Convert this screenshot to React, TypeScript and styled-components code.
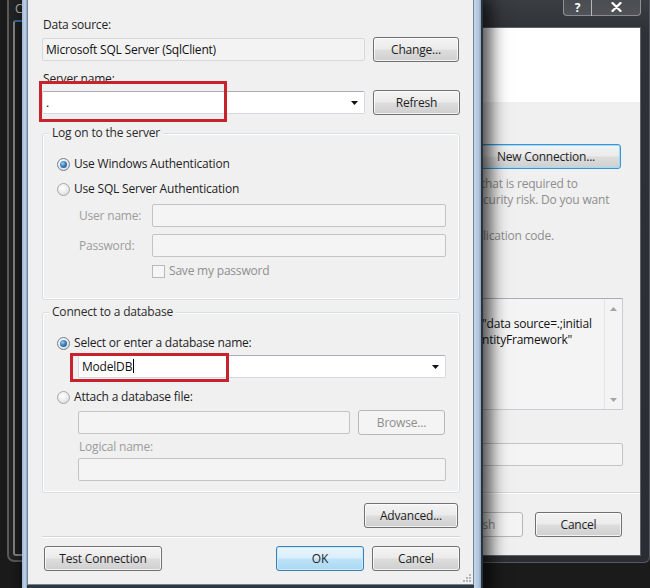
import * as React from 'react';
import styled, { createGlobalStyle, css } from 'styled-components';

const GlobalStyle = createGlobalStyle`
  html,
  body {
    margin: 0;
    padding: 0;
    background: #1b1b1b;
  }

  body {
    font-family: 'Segoe UI', 'Open Sans', 'Noto Sans', sans-serif;
    font-size: 12px;
    letter-spacing: -0.2px;
    color: #1e1e1e;
  }
`;

/** Desktop behind all windows */
const Desktop = styled.div`
  position: relative;
  width: 650px;
  height: 588px;
  overflow: hidden;
  background: #1b1b1b;
`;

/* ---------- window lying far behind, on the left ---------- */

const BackWindow = styled.div`
  position: absolute;
  left: 7px;
  top: -10px;
  z-index: 1;
  width: 140px;
  height: 572px;
  box-sizing: border-box;
  border: 2px solid #5b5b5b;
  border-radius: 7px;
  background: #242424;
  padding: 0 4px 4px;
  display: flex;
  flex-direction: column;
`;

const BackTitle = styled.div`
  height: 28px;
  box-sizing: border-box;
  padding: 9px 0 0 2px;
  line-height: 16px;
  color: #bdbdbd;
`;

const BackClient = styled.div`
  flex: 1;
  border: 2px solid #868686;
  border-top-color: #3a6ea8;
  border-radius: 3px;
  background: #1e1e1e;
`;

/* ---------- wizard window on the right ---------- */

const Wizard = styled.div`
  position: absolute;
  left: 460px;
  top: -6px;
  z-index: 2;
  width: 190px;
  height: 569px;
  box-sizing: border-box;
  padding: 0 9px 7px 10px;
  border-radius: 6px 0 6px 6px;
  background: linear-gradient(#3c4045, #2e3136 40px, #2a2d31);
  box-shadow: inset 0 0 0 1px #55595f;
  display: flex;
  flex-direction: column;
`;

const TitleBar = styled.div`
  height: 33px;
  display: flex;
  justify-content: flex-end;
  align-items: flex-start;
`;

const CaptionButton = styled.div<{ $width: number; $first?: boolean }>`
  width: ${(p) => p.$width}px;
  height: 22px;
  box-sizing: border-box;
  display: flex;
  align-items: center;
  justify-content: center;
  padding-top: 5px;
  margin-left: ${(p) => (p.$first ? 0 : -1)}px;
  border: 1px solid rgba(205, 212, 220, 0.5);
  border-top: none;
  border-radius: ${(p) => (p.$first ? '0 0 0 4px' : '0 0 4px 0')};
  background: linear-gradient(rgba(255, 255, 255, 0.06), rgba(255, 255, 255, 0.14));
  color: #fff;
  font-weight: 700;
  font-size: 12px;
`;

const WizardClient = styled.div`
  flex: 1;
  display: flex;
  flex-direction: column;
  background: #f0f0f0;
  border: 1px solid #5a636e;
`;

const WizardHeader = styled.div`
  height: 74px;
  background: #fff;
`;

const WizardBody = styled.div`
  flex: 1;
  display: flex;
  flex-direction: column;
  align-items: flex-start;
`;

const NoteLine = styled.div<{ $mt: number; $indent: number }>`
  margin-top: ${(p) => p.$mt}px;
  padding-left: ${(p) => p.$indent}px;
  line-height: 16px;
  color: #8e8e8e;
  white-space: nowrap;
`;

const ConnStringBox = styled.div`
  margin-top: 54px;
  width: 152px;
  height: 112px;
  box-sizing: border-box;
  border: 1px solid #c9ccd0;
  border-top-color: #abadb3;
  background: #f4f4f4;
  display: flex;
`;

const ConnText = styled.div`
  flex: 1;
  padding-top: 17px;
  line-height: 16px;
  color: #111;
  white-space: nowrap;
  overflow: hidden;
`;

const ConnLine = styled.div<{ $indent: number }>`
  padding-left: ${(p) => p.$indent}px;
`;

const ScrollBar = styled.div`
  width: 17px;
  border-left: 1px solid #e4e4e4;
  display: flex;
  flex-direction: column;
  justify-content: space-between;
  align-items: center;
  padding: 8px 0 7px;
`;

const Separator = styled.div<{ $mt: number }>`
  align-self: stretch;
  margin-top: ${(p) => p.$mt}px;
  height: 1px;
  background: #d5d5d5;
  border-bottom: 1px solid #fff;
`;

const ButtonBar = styled.div<{ $mt: number; $gap: number; $pr?: number }>`
  align-self: stretch;
  margin-top: ${(p) => p.$mt}px;
  padding-right: ${(p) => p.$pr ?? 0}px;
  display: flex;
  justify-content: flex-end;
  gap: ${(p) => p.$gap}px;
`;

/* ---------- Add Connection dialog ---------- */

const Dialog = styled.div`
  position: absolute;
  left: 22px;
  top: 0;
  z-index: 3;
  width: 461px;
  height: 596px;
  box-sizing: border-box;
  padding: 0 7px 0 5px;
  border-right: 2px solid #2b323b;
  background:
    linear-gradient(to right, #9fb8d4, #c0d3e8 60%, #8ea6c2) left top / 5px 100% no-repeat,
    linear-gradient(to right, #c6d7ea, #acc3dd 70%, #8aa2bd) right top / 7px 100% no-repeat,
    #2f3740;
  box-shadow: 5px 0 16px 3px rgba(0, 0, 0, 0.7);
`;

const DialogClient = styled.div`
  position: relative;
  height: 585px;
  box-sizing: border-box;
  padding: 0 13px 0 14px;
  background: #f0f0f0;
  border: 1px solid #6f8296;
  border-top: none;
  display: flex;
  flex-direction: column;
`;

const Label = styled.div<{ $mt?: number; $indent?: number; $muted?: boolean }>`
  margin-top: ${(p) => p.$mt ?? 0}px;
  padding-left: ${(p) => p.$indent ?? 0}px;
  line-height: 16px;
  color: ${(p) => (p.$muted ? '#9c9c9c' : '#1e1e1e')};
  white-space: nowrap;
`;

const Row = styled.div<{ $mt?: number; $indent?: number; $gap?: number; $height?: number }>`
  display: flex;
  align-items: center;
  height: ${(p) => p.$height ?? 25}px;
  margin-top: ${(p) => p.$mt ?? 0}px;
  padding-left: ${(p) => p.$indent ?? 0}px;
  gap: ${(p) => p.$gap ?? 0}px;
`;

const RowLabel = styled.span<{ $width: number }>`
  width: ${(p) => p.$width}px;
  flex: none;
  color: #9c9c9c;
`;

type FieldTone = 'edit' | 'readonly' | 'disabled';

const fieldTones: Record<FieldTone, ReturnType<typeof css>> = {
  edit: css`
    background: #fff;
    border-color: #d5d9de;
    border-top-color: #abadb3;
  `,
  readonly: css`
    background: #f3f3f3;
    border-color: #d6d9dc;
  `,
  disabled: css`
    background: #f4f4f4;
    border-color: #c3c3c3;
  `,
};

const Field = styled.div<{ $width: number; $tone?: FieldTone; $mt?: number }>`
  position: relative;
  width: ${(p) => p.$width}px;
  height: 23px;
  flex: none;
  box-sizing: border-box;
  margin-top: ${(p) => p.$mt ?? 0}px;
  display: flex;
  align-items: center;
  justify-content: space-between;
  padding: 0 6px 0 3px;
  border: 1px solid;
  border-radius: 2px;
  color: #111;
  white-space: nowrap;
  ${(p) => fieldTones[p.$tone ?? 'edit']}
`;

const Caret = styled.span`
  display: inline-block;
  width: 1px;
  height: 14px;
  margin-left: 1px;
  vertical-align: -2px;
  background: #000;
`;

/** Red outline drawn over a field */
const Highlight = styled.div<{ $x: number; $y: number; $w: number; $h: number }>`
  position: absolute;
  left: ${(p) => p.$x}px;
  top: ${(p) => p.$y}px;
  width: ${(p) => p.$w}px;
  height: ${(p) => p.$h}px;
  box-sizing: border-box;
  border: 3px solid #c8232d;
  pointer-events: none;
`;

type ButtonVariant = 'normal' | 'primary' | 'focus' | 'disabled';

const buttonVariants: Record<ButtonVariant, ReturnType<typeof css>> = {
  normal: css``,
  primary: css`
    border-color: #3c7fb1;
    background: linear-gradient(#e9f5fd 0%, #d9effc 48%, #bee3f8 52%, #a9d8f3 100%);
    box-shadow: inset 0 0 0 1px #cbeafc;
  `,
  focus: css`
    border-color: #3d93cf;
    box-shadow: inset 0 0 0 1px #9fdcfa;
  `,
  disabled: css`
    color: #8e8e8e;
    border-color: #b4b8bb;
    background: #f4f4f4;
    box-shadow: none;
  `,
};

const Button = styled.button<{ $width: number; $variant?: ButtonVariant; $mt?: number; $ml?: number }>`
  width: ${(p) => p.$width}px;
  height: 25px;
  flex: none;
  box-sizing: border-box;
  padding: 0;
  margin: ${(p) => p.$mt ?? 0}px 0 0 ${(p) => p.$ml ?? 0}px;
  font: inherit;
  letter-spacing: inherit;
  color: #1e1e1e;
  border: 1px solid #707070;
  border-radius: 3px;
  background: linear-gradient(#f3f3f3 0%, #ebebeb 48%, #dddddd 52%, #cfcfcf 100%);
  box-shadow: inset 0 0 0 1px rgba(255, 255, 255, 0.75);
  white-space: nowrap;
  ${(p) => buttonVariants[p.$variant ?? 'normal']}
`;

const Group = styled.div<{ $mt: number; $pb: number }>`
  margin-top: ${(p) => p.$mt}px;
  padding: 0 13px ${(p) => p.$pb}px 14px;
  border: 1px solid #d5dfe5;
  border-radius: 3px;
  box-shadow: inset 0 0 0 1px #fff;
  display: flex;
  flex-direction: column;
`;

const Legend = styled.div`
  align-self: flex-start;
  margin: -9px 0 0 -8px;
  padding: 0 3px;
  line-height: 16px;
  background: #f0f0f0;
  color: #2b2b2b;
`;

const Option = styled.div<{ $mt: number; $indent?: number; $muted?: boolean }>`
  display: flex;
  align-items: center;
  gap: 4px;
  line-height: 16px;
  margin-top: ${(p) => p.$mt}px;
  padding-left: ${(p) => p.$indent ?? 0}px;
  color: ${(p) => (p.$muted ? '#8f8f8f' : '#1e1e1e')};
  white-space: nowrap;
`;

const Radio = styled.span<{ $checked?: boolean }>`
  width: 13px;
  height: 13px;
  flex: none;
  box-sizing: border-box;
  display: inline-flex;
  align-items: center;
  justify-content: center;
  border-radius: 50%;
  border: 1px solid ${(p) => (p.$checked ? '#6f7f8f' : '#a7a7a7')};
  background: radial-gradient(circle at 40% 35%, #ffffff 0%, #eeeeee 45%, #d2d2d2 100%);

  &::after {
    content: '';
    display: ${(p) => (p.$checked ? 'block' : 'none')};
    width: 7px;
    height: 7px;
    border-radius: 50%;
    background: radial-gradient(circle at 38% 35%, #9fd0f5 0%, #3a7fbf 45%, #1b4f86 100%);
  }
`;

const CheckBox = styled.span`
  width: 13px;
  height: 13px;
  flex: none;
  box-sizing: border-box;
  border: 1px solid #b9b9b9;
  background: #f6f6f6;
`;

const BottomBar = styled.div`
  display: flex;
  align-items: center;
  gap: 8px;
  height: 25px;
  margin-top: 8px;
`;

const Grip = styled.svg`
  position: absolute;
  right: 1px;
  bottom: 1px;
`;

const DropArrow: React.FC<{ color?: string; up?: boolean }> = ({ color = '#111', up }) => (
  <svg width="7" height="4" viewBox="0 0 7 4">
    <path d={up ? 'M0 4h7L3.5 0z' : 'M0 0h7L3.5 4z'} fill={color} />
  </svg>
);

const CloseGlyph = () => (
  <svg width="11" height="10" viewBox="0 0 11 10">
    <path d="M1.5 1l8 8M9.5 1l-8 8" stroke="#fff" strokeWidth="2.3" strokeLinecap="round" />
  </svg>
);

const App: React.FC = () => (
  <Desktop>
    <GlobalStyle />

    <BackWindow>
      <BackTitle>C</BackTitle>
      <BackClient />
    </BackWindow>

    <Wizard>
      <TitleBar>
        <CaptionButton $width={29} $first>?</CaptionButton>
        <CaptionButton $width={50}>
          <CloseGlyph />
        </CaptionButton>
      </TitleBar>
      <WizardClient>
        <WizardHeader />
        <WizardBody>
          <Button $width={150} $variant="focus" $mt={42}>
            New Connection...
          </Button>
          <NoteLine $mt={7} $indent={10}>that is required to</NoteLine>
          <NoteLine $mt={0} $indent={12}>curity risk. Do you want</NoteLine>
          <NoteLine $mt={20} $indent={12}>lication code.</NoteLine>
          <ConnStringBox>
            <ConnText>
              <ConnLine $indent={10}>"data source=.;initial</ConnLine>
              <ConnLine $indent={10}>ntityFramework"</ConnLine>
            </ConnText>
            <ScrollBar>
              <DropArrow color="#a4a4a4" up />
              <DropArrow color="#a4a4a4" />
            </ScrollBar>
          </ConnStringBox>
          <Field $width={152} $tone="disabled" $mt={33} />
          <Separator $mt={26} />
          <ButtonBar $mt={18} $gap={12} $pr={18}>
            <Button $width={87} $variant="disabled">Finish</Button>
            <Button $width={87}>Cancel</Button>
          </ButtonBar>
        </WizardBody>
      </WizardClient>
    </Wizard>

    <Dialog>
      <DialogClient>
        <Label $mt={17} $indent={1}>Data source:</Label>
        <Row $mt={4} $gap={8}>
          <Field $width={323} $tone="readonly">Microsoft SQL Server (SqlClient)</Field>
          <Button $width={86}>Change...</Button>
        </Row>

        <Label $mt={9} $indent={1}>Server name:</Label>
        <Row $mt={3} $gap={8}>
          <Field $width={323}>
            <span>.</span>
            <DropArrow />
            <Highlight $x={-4} $y={-11} $w={188} $h={41} />
          </Field>
          <Button $width={87}>Refresh</Button>
        </Row>

        <Group $mt={18} $pb={20}>
          <Legend>Log on to the server</Legend>
          <Option $mt={15}>
            <Radio $checked />
            Use Windows Authentication
          </Option>
          <Option $mt={9}>
            <Radio />
            Use SQL Server Authentication
          </Option>
          <Row $mt={7} $indent={22} $height={23}>
            <RowLabel $width={73}>User name:</RowLabel>
            <Field $width={294} $tone="disabled" />
          </Row>
          <Row $mt={7} $indent={22} $height={23}>
            <RowLabel $width={73}>Password:</RowLabel>
            <Field $width={294} $tone="disabled" />
          </Row>
          <Option $mt={6} $indent={95} $muted>
            <CheckBox />
            Save my password
          </Option>
        </Group>

        <Group $mt={12} $pb={11}>
          <Legend>Connect to a database</Legend>
          <Option $mt={15}>
            <Radio $checked />
            Select or enter a database name:
          </Option>
          <Row $mt={4} $indent={21} $height={23}>
            <Field $width={368}>
              <span>
                ModelDB
                <Caret />
              </span>
              <DropArrow />
              <Highlight $x={-9} $y={-3} $w={159} $h={29} />
            </Field>
          </Row>
          <Option $mt={11}>
            <Radio />
            Attach a database file:
          </Option>
          <Row $mt={5} $indent={21} $gap={8}>
            <Field $width={272} $tone="disabled" />
            <Button $width={87} $variant="disabled">Browse...</Button>
          </Row>
          <Label $mt={4} $indent={22} $muted>Logical name:</Label>
          <Row $mt={3} $indent={21} $height={23}>
            <Field $width={368} $tone="disabled" />
          </Row>
        </Group>

        <ButtonBar $mt={10} $gap={0} $pr={2}>
          <Button $width={94}>Advanced...</Button>
        </ButtonBar>

        <Separator $mt={8} />

        <BottomBar>
          <Button $width={118} $ml={2} style={{ marginRight: 'auto' }}>
            Test Connection
          </Button>
          <Button $width={88} $variant="primary">OK</Button>
          <Button $width={88}>Cancel</Button>
        </BottomBar>

        <Grip width="10" height="10" viewBox="0 0 10 10">
          <g fill="#b5b5b5">
            <rect x="7" y="1" width="2" height="2" />
            <rect x="4" y="4" width="2" height="2" />
            <rect x="7" y="4" width="2" height="2" />
            <rect x="1" y="7" width="2" height="2" />
            <rect x="4" y="7" width="2" height="2" />
            <rect x="7" y="7" width="2" height="2" />
          </g>
        </Grip>
      </DialogClient>
    </Dialog>
  </Desktop>
);

export default App;
